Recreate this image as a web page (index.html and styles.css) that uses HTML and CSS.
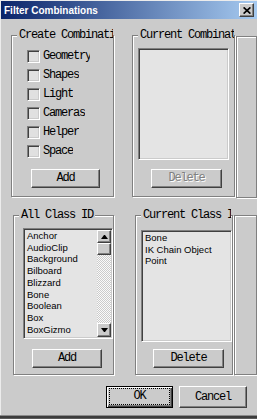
FILE: index.html
```html
<!DOCTYPE html>
<html lang="en">
<head>
    <meta charset="UTF-8">
    <meta name="viewport" content="width=device-width, initial-scale=1.0">
    <title>Filter Combinations</title>
    <link rel="stylesheet" href="styles.css">
</head>
<body>
    <div class="window">
        <div class="titlebar">
            <span class="title">Filter Combinations</span>
            <button class="close" aria-label="Close">
                <svg width="8" height="7" viewBox="0 0 8 7">
                    <path d="M0.6 0.4 L7.4 6.6 M7.4 0.4 L0.6 6.6" stroke="#000" stroke-width="1.7" fill="none"/>
                </svg>
            </button>
        </div>

        <div class="dialog">
            <div class="row row-top">
                <div class="group g-create">
                    <div class="legend legend-wide">Create Combinations</div>
                    <ul class="checks">
                        <li class="check"><span class="box"></span><span class="check-label">Geometry</span></li>
                        <li class="check"><span class="box"></span><span class="check-label">Shapes</span></li>
                        <li class="check"><span class="box"></span><span class="check-label">Light</span></li>
                        <li class="check"><span class="box"></span><span class="check-label">Cameras</span></li>
                        <li class="check"><span class="box"></span><span class="check-label">Helper</span></li>
                        <li class="check"><span class="box"></span><span class="check-label">Space</span></li>
                    </ul>
                    <button class="btn btn-add">Add</button>
                </div>
                <div class="group g-combos">
                    <div class="legend legend-wide">Current Combinations</div>
                    <div class="listbox lb-combos"></div>
                    <button class="btn btn-delete" disabled>Delete</button>
                </div>
                <div class="group g-edge-top"></div>
            </div>

            <div class="row row-bottom">
                <div class="group g-all">
                    <div class="legend">All Class ID</div>
                    <div class="listbox lb-all">
                        <ul class="items">
                            <li>Anchor</li>
                            <li>AudioClip</li>
                            <li>Background</li>
                            <li>Bilboard</li>
                            <li>Blizzard</li>
                            <li>Bone</li>
                            <li>Boolean</li>
                            <li>Box</li>
                            <li>BoxGizmo</li>
                            <li>Camera</li>
                        </ul>
                        <div class="scrollbar">
                            <span class="sb-btn"><span class="arrow-up"></span></span>
                            <span class="sb-thumb"></span>
                            <span class="sb-track"></span>
                            <span class="sb-btn sb-down"><span class="arrow-down"></span></span>
                        </div>
                    </div>
                    <button class="btn btn-add2">Add</button>
                </div>
                <div class="group g-class">
                    <div class="legend legend-class">Current Class ID</div>
                    <div class="listbox lb-class">
                        <ul class="items">
                            <li>Bone</li>
                            <li>IK Chain Object</li>
                            <li>Point</li>
                        </ul>
                    </div>
                    <button class="btn btn-delete2">Delete</button>
                </div>
                <div class="group g-edge-bottom"></div>
            </div>

            <div class="actions">
                <button class="btn btn-ok"><span class="focus">OK</span></button>
                <button class="btn btn-cancel">Cancel</button>
            </div>
        </div>
    </div>
</body>
</html>
```

FILE: styles.css
```css
body {
    margin: 0;
    background-color: #cbcbcb;
    font-family: "Liberation Sans", Arial, sans-serif;
}
.window {
    width: 257px;
    height: 419px;
    overflow: hidden;
    background-color: #cbcbcb;
    box-shadow: inset 0 -1px #5a5a5a, inset 0 -3px #3c3c3c, inset 0 -4px #8a8a8a, inset 1px 1px #ececec;
}
.titlebar {
    display: flex;
    align-items: center;
    justify-content: space-between;
    height: 18px;
    margin: 1px 0 0 1px;
    padding: 0 3px 0 3px;
    background: linear-gradient(to right, #0a246a, #a6caf0);
}
.title {
    color: #fff;
    font-weight: bold;
    font-size: 10px;
    white-space: nowrap;
}
.close {
    display: flex;
    align-items: center;
    justify-content: center;
    width: 15px;
    height: 14px;
    padding: 0;
    background-color: #cbcbcb;
    border: 1px solid;
    border-color: #fff #404040 #404040 #fff;
    box-shadow: inset -1px -1px #808080;
}

/* dialog body */
.row {
    display: flex;
    align-items: flex-start;
}
.row-top {
    padding-top: 16px;
}
.row-bottom {
    margin-top: 17px;
}
.group {
    box-sizing: border-box;
    border: 1px solid #808080;
    box-shadow: inset 1px 1px #fff, 1px 1px #fff;
}
.legend {
    width: max-content;
    margin: -7px 0 0 5px;
    padding: 0 2px;
    background-color: #cbcbcb;
    font-family: "Liberation Mono", "Courier New", monospace;
    font-size: 12px;
    letter-spacing: -1.2px;
    line-height: 12px;
    white-space: nowrap;
    overflow: hidden;
}
.legend-wide {
    max-width: 92px;
}
.legend-class {
    max-width: 86px;
}
.g-create {
    width: 109px;
    height: 162px;
    margin-left: 11px;
}
.g-combos {
    width: 108px;
    height: 162px;
    margin-left: 18px;
}
.g-edge-top {
    width: 40px;
    height: 162px;
    margin: 1px 0 0 1px;
}
.g-all {
    width: 107px;
    height: 160px;
    margin-left: 13px;
}
.g-class {
    width: 107px;
    height: 160px;
    margin-left: 21px;
}
.g-edge-bottom {
    width: 40px;
    height: 160px;
    margin-left: 1px;
}

/* checkboxes */
.checks {
    list-style: none;
    margin: 9px 0 0 15px;
    padding: 0;
    display: flex;
    flex-direction: column;
    gap: 6px;
}
.check {
    display: flex;
    align-items: center;
    height: 13px;
}
.box {
    box-sizing: border-box;
    width: 13px;
    height: 13px;
    border: 1px solid;
    border-color: #808080 #fff #fff #808080;
    box-shadow: inset 1px 1px #404040, inset -1px -1px #cbcbcb;
    background-color: #e0e0e0;
}
.check-label {
    margin-left: 3px;
    max-width: 47px;
    overflow: hidden;
    white-space: nowrap;
    font-family: "Liberation Mono", "Courier New", monospace;
    font-size: 12px;
    letter-spacing: -1.2px;
    line-height: 13px;
}

/* buttons */
.btn {
    box-sizing: border-box;
    display: block;
    height: 19px;
    padding: 0;
    background-color: #cbcbcb;
    border: 1px solid;
    border-color: #fff #404040 #404040 #fff;
    box-shadow: inset -1px -1px #808080;
    color: #000;
    font-family: "Liberation Mono", "Courier New", monospace;
    font-size: 12px;
    letter-spacing: -1.2px;
    line-height: 15px;
    text-align: center;
}
.btn:disabled {
    color: #808080;
    text-shadow: 1px 1px #fff;
}
.btn-add {
    width: 69px;
    margin: 11px 0 0 19px;
}
.btn-delete {
    width: 71px;
    margin: 9px 0 0 18px;
}
.btn-add2 {
    width: 70px;
    margin: 10px 0 0 18px;
}
.btn-delete2 {
    width: 71px;
    margin: 7px 0 0 17px;
}
.actions {
    display: flex;
    margin-top: 11px;
}
.btn-ok {
    width: 67px;
    height: 22px;
    margin-left: 106px;
    display: flex;
    padding: 1px 2px 2px 2px;
    border: 1px solid #000;
    box-shadow: inset 1px 1px #fff, inset -1px -1px #404040, inset -2px -2px #808080;
}
.focus {
    flex: 1;
    border: 1px dotted #000;
    line-height: 14px;
}
.btn-cancel {
    width: 68px;
    height: 22px;
    margin-left: 6px;
    line-height: 18px;
}

/* list boxes */
.listbox {
    box-sizing: border-box;
    border: 1px solid;
    border-color: #808080 #fff #fff #808080;
    box-shadow: inset 1px 1px #404040, inset -1px -1px #cbcbcb;
    background-color: #e4e4e4;
    overflow: hidden;
}
.lb-combos {
    width: 91px;
    height: 112px;
    margin: 7px 0 0 5px;
}
.lb-all {
    display: flex;
    width: 90px;
    height: 111px;
    margin: 7px 0 0 9px;
    padding: 1px 1px 1px 0;
}
.lb-class {
    width: 91px;
    height: 112px;
    margin: 9px 0 0 5px;
    padding-top: 1px;
}
.items {
    list-style: none;
    margin: 0;
    padding: 0 0 0 3px;
    font-size: 9.5px;
    line-height: 11.7px;
    white-space: nowrap;
    overflow: hidden;
}
.lb-all .items {
    flex: 1;
}
.scrollbar {
    display: flex;
    flex-direction: column;
    width: 14px;
}
.sb-btn,
.sb-thumb {
    box-sizing: border-box;
    display: flex;
    align-items: center;
    justify-content: center;
    height: 13px;
    background-color: #cbcbcb;
    border: 1px solid;
    border-color: #fff #404040 #404040 #fff;
    box-shadow: inset -1px -1px #808080;
}
.sb-thumb {
    height: 12px;
}
.sb-down {
    height: 14px;
}
.sb-track {
    flex: 1;
    background: repeating-conic-gradient(#fafafa 0 25%, #cbcbcb 0 50%) 0 0 / 2px 2px;
}
.arrow-up {
    width: 1px;
    border-left: 3px solid transparent;
    border-right: 3px solid transparent;
    border-bottom: 4px solid #000;
}
.arrow-down {
    width: 1px;
    border-left: 3px solid transparent;
    border-right: 3px solid transparent;
    border-top: 4px solid #000;
}
```
